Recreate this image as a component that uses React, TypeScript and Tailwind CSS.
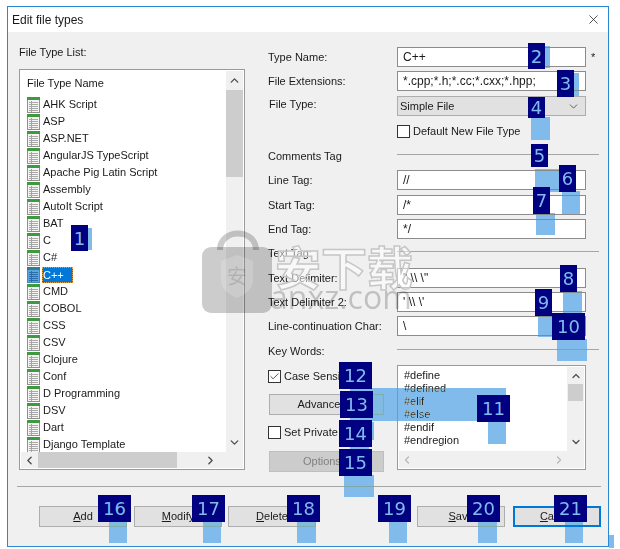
import { ChevronDown, ChevronLeft, ChevronRight, ChevronUp, Check, X } from 'lucide-react';

const fileTypes = [
  'AHK Script', 'ASP', 'ASP.NET', 'AngularJS TypeScript', 'Apache Pig Latin Script', 'Assembly', 'AutoIt Script',
  'BAT', 'C', 'C#', 'C++', 'CMD', 'COBOL', 'CSS', 'CSV', 'Clojure', 'Conf', 'D Programming', 'DSV', 'Dart', 'Django Template',
];

const keyWords = ['#define', '#defined', '#elif', '#else', '#endif', '#endregion'];

// callout numbers sit on top of the dialog, so these keep their own coordinates
const callouts = [
  { n: '1', box: 'left-[71px] top-[225px] w-[17px] h-[26px]' },
  { n: '2', box: 'left-[528px] top-[43px] w-[17px] h-[26px]' },
  { n: '3', box: 'left-[557px] top-[70px] w-[17px] h-[27px]' },
  { n: '4', box: 'left-[528px] top-[97px] w-[17px] h-[21px]' },
  { n: '5', box: 'left-[531px] top-[144px] w-[17px] h-[23px]' },
  { n: '6', box: 'left-[559px] top-[165px] w-[17px] h-[27px]' },
  { n: '7', box: 'left-[533px] top-[187px] w-[17px] h-[27px]' },
  { n: '8', box: 'left-[560px] top-[265px] w-[17px] h-[27px]' },
  { n: '9', box: 'left-[535px] top-[289px] w-[17px] h-[27px]' },
  { n: '10', box: 'left-[552px] top-[313px] w-[33px] h-[27px]' },
  { n: '11', box: 'left-[477px] top-[395px] w-[33px] h-[27px]' },
  { n: '12', box: 'left-[339px] top-[362px] w-[33px] h-[27px]' },
  { n: '13', box: 'left-[340px] top-[391px] w-[33px] h-[27px]' },
  { n: '14', box: 'left-[339px] top-[420px] w-[33px] h-[27px]' },
  { n: '15', box: 'left-[339px] top-[449px] w-[33px] h-[27px]' },
  { n: '16', box: 'left-[98px] top-[495px] w-[33px] h-[27px]' },
  { n: '17', box: 'left-[192px] top-[495px] w-[33px] h-[27px]' },
  { n: '18', box: 'left-[287px] top-[495px] w-[33px] h-[27px]' },
  { n: '19', box: 'left-[378px] top-[495px] w-[33px] h-[27px]' },
  { n: '20', box: 'left-[467px] top-[495px] w-[33px] h-[27px]' },
  { n: '21', box: 'left-[554px] top-[495px] w-[33px] h-[27px]' },
];

const bars = [
  'left-[88px] top-[228px] w-[4px] h-[22px]',
  'left-[545px] top-[46px] w-[5px] h-[22px]',
  'left-[574px] top-[73px] w-[5px] h-[23px]',
  'left-[531px] top-[117px] w-[19px] h-[23px]',
  'left-[535px] top-[169px] w-[24px] h-[23px]',
  'left-[562px] top-[191px] w-[18px] h-[23px]',
  'left-[536px] top-[213px] w-[19px] h-[22px]',
  'left-[563px] top-[291px] w-[19px] h-[22px]',
  'left-[538px] top-[315px] w-[19px] h-[22px]',
  'left-[557px] top-[339px] w-[30px] h-[22px]',
  'left-[350px] top-[388px] w-[156px] h-[33px]',
  'left-[488px] top-[422px] w-[18px] h-[22px]',
  'left-[350px] top-[422px] w-[24px] h-[18px]',
  'left-[350px] top-[447px] w-[19px] h-[2px]',
  'left-[344px] top-[475px] w-[30px] h-[22px]',
  'left-[109px] top-[522px] w-[18px] h-[21px]',
  'left-[203px] top-[522px] w-[18px] h-[21px]',
  'left-[297px] top-[522px] w-[19px] h-[21px]',
  'left-[389px] top-[522px] w-[18px] h-[21px]',
  'left-[478px] top-[522px] w-[19px] h-[21px]',
  'left-[565px] top-[522px] w-[18px] h-[21px]',
  'left-[609px] top-[535px] w-[5px] h-[13px]',
];

function FileIcon({ selected }: { selected?: boolean }) {
  return (
    <svg width="13" height="16" viewBox="0 0 13 16" className="shrink-0">
      <rect x="0.5" y="0.5" width="12" height="15" fill={selected ? '#5da5e0' : '#f4f4f4'} stroke={selected ? '#4a86b8' : '#8f8f8f'} />
      <rect x="0" y="0" width="13" height="3" fill={selected ? '#2f7f8f' : '#3f9a3f'} />
      <path d="M2 5.5h9M2 7.5h9M2 9.5h9M2 11.5h9M2 13.5h9" stroke={selected ? '#2a6ea8' : '#a9a9a9'} strokeWidth="1" />
      <path d="M4.5 4v11" stroke={selected ? '#2a6ea8' : '#e08a8a'} strokeWidth="1" />
    </svg>
  );
}

function TextField({ label, value }: { label: string; value: string }) {
  return (
    <div className="flex items-center h-5">
      <span className="w-[129px]">{label}</span>
      <div className="w-[189px] h-5 bg-white border border-[#8c8c8c] px-[5px] text-[12px] leading-[18px] whitespace-pre">{value}</div>
    </div>
  );
}

function Section({ label, className }: { label: string; className: string }) {
  return (
    <div className={`flex items-center h-[14px] ${className}`}>
      <span className="w-[129px] pt-[4px]">{label}</span>
      <div className="w-[202px] h-px bg-[#a6a6a6]" />
    </div>
  );
}

function DialogButton({ mnemonic, rest, focused }: { mnemonic: string; rest: string; focused?: boolean }) {
  return (
    <button className={`w-[88px] h-[21px] bg-[#e1e1e1] flex items-center justify-center ${focused ? 'border-2 border-[#0078d7]' : 'border border-[#adadad]'}`}>
      <span className="underline">{mnemonic}</span>{rest}
    </button>
  );
}

export default function App() {
  return (
    <div className="relative w-[620px] h-[549px] bg-white overflow-hidden text-[11px] text-[#1a1a1a] font-['Liberation_Sans',sans-serif]">
      <div className="ml-[7px] mt-[6px] w-[602px] h-[541px] border border-[#2a87d0] bg-[#f0f0f0] flex flex-col">
        <div className="h-[25px] bg-white flex items-center justify-between pl-[4px] pr-[7px] text-[12px]">
          <span>Edit file types</span>
          <X size={15} strokeWidth={1.2} />
        </div>

        <div className="flex h-[454px]">
          <div className="ml-[11px] w-[225px] flex flex-col">
            <div className="h-[37px] flex items-center pt-[3px]">File Type List:</div>
            <div className="w-[226px] h-[401px] bg-white border border-[#9a9a9a] p-[1px] flex flex-col">
              <div className="flex h-[381px]">
                <div className="flex-1 pl-[6px] min-w-0">
                  <div className="h-[24px] flex items-end pb-[4px]">File Type Name</div>
                  <ul className="mt-[1px]">
                    {fileTypes.map((name) => (
                      <li key={name} className="flex items-center gap-[2px] h-[17px]">
                        <FileIcon selected={name === 'C++'} />
                        {name === 'C++' ? (
                          <span className="bg-[#0078d7] text-white h-[16px] px-[1px] w-[31px] leading-[16px] outline-1 outline-dotted outline-[#e0a050] -outline-offset-1">{name}</span>
                        ) : (
                          <span className="px-[1px]">{name}</span>
                        )}
                      </li>
                    ))}
                  </ul>
                </div>
                <div className="w-[17px] bg-[#f0f0f0] flex flex-col items-center">
                  <ChevronUp size={13} strokeWidth={2.6} className="mt-[3px] text-[#505050]" />
                  <div className="w-[17px] h-[87px] bg-[#cdcdcd] mt-[3px]" />
                  <ChevronDown size={13} strokeWidth={2.6} className="mt-auto mb-[3px] text-[#505050]" />
                </div>
              </div>
              <div className="h-[16px] bg-[#f0f0f0] flex items-center pl-[2px] text-[#505050]">
                <ChevronLeft size={13} strokeWidth={2.6} />
                <div className="w-[139px] h-[16px] bg-[#cdcdcd] ml-[2px]" />
                <ChevronRight size={13} strokeWidth={2.6} className="ml-[27px]" />
              </div>
            </div>
          </div>

          <div className="ml-[24px] flex flex-col pt-[15px]">
            <div className="relative">
              <TextField label="Type Name:" value="C++" />
              <span className="absolute left-[323px] top-[2px]">*</span>
            </div>
            <div className="mt-[4px]"><TextField label="File Extensions:" value="*.cpp;*.h;*.cc;*.cxx;*.hpp;" /></div>
            <div className="flex items-center h-5 mt-[5px]">
              <span className="w-[129px] pl-[1px] pb-[3px]">File Type:</span>
              <div className="w-[189px] h-5 bg-[#e1e1e1] border border-[#adadad] pl-[2px] pr-[5px] flex items-center justify-between">
                Simple File
                <ChevronDown size={13} strokeWidth={1.5} className="text-[#404040]" />
              </div>
            </div>
            <div className="flex items-center gap-[3px] ml-[129px] mt-[9px] h-[12px]">
              <div className="w-[13px] h-[13px] bg-white border border-[#333]" />
              <span>Default New File Type</span>
            </div>

            <Section label="Comments Tag" className="mt-[10px]" />
            <div className="mt-[9px]"><TextField label="Line Tag:" value="//" /></div>
            <div className="mt-[5px]"><TextField label="Start Tag:" value="/*" /></div>
            <div className="mt-[4px]"><TextField label="End Tag:" value="*/" /></div>

            <Section label="Text Tag:" className="mt-[5px]" />
            <div className="mt-[10px]"><TextField label="Text Delimiter:" value={'" \\\\ \\"'} /></div>
            <div className="mt-[4px]"><TextField label="Text Delimiter 2:" value={"' \\\\ \\'"} /></div>
            <div className="mt-[4px]"><TextField label="Line-continuation Char:" value="\" /></div>

            <Section label="Key Words:" className="mt-[6px]" />

            <div className="flex mt-[9px]">
              <div className="w-[129px] flex flex-col">
                <div className="flex items-center gap-[3px] h-[13px] mt-[5px]">
                  <div className="w-[13px] h-[13px] bg-white border border-[#333] flex items-center justify-center">
                    <Check size={11} strokeWidth={1.6} />
                  </div>
                  <span>Case Sensitive</span>
                </div>
                <button className="w-[115px] h-[21px] ml-[1px] mt-[11px] bg-[#e1e1e1] border border-[#adadad]">Advanced...</button>
                <div className="flex items-center gap-[3px] h-[13px] mt-[11px]">
                  <div className="w-[13px] h-[13px] bg-white border border-[#333]" />
                  <span>Set Private Colors</span>
                </div>
                <button className="w-[115px] h-[21px] ml-[1px] mt-[12px] bg-[#cccccc] border border-[#bfbfbf] text-[#808080]">Options...</button>
              </div>
              <div className="w-[189px] h-[105px] border border-[#9a9a9a] p-[1px] bg-white">
                <div className="h-full bg-[#f0f0f0] flex flex-col">
                  <div className="flex h-[84px]">
                    <div className="w-[168px] bg-white pl-[5px] pt-[2px]">
                      {keyWords.map((word) => (
                        <div key={word} className="h-[13px] leading-[13px]">{word}</div>
                      ))}
                    </div>
                    <div className="flex-1 flex flex-col items-center">
                      <ChevronUp size={12} strokeWidth={2.6} className="mt-[3px] text-[#505050]" />
                      <div className="w-[15px] h-[17px] bg-[#cdcdcd] mt-[2px]" />
                      <ChevronDown size={12} strokeWidth={2.6} className="mt-auto mb-[3px] text-[#505050]" />
                    </div>
                  </div>
                  <div className="w-[164px] ml-[2px] mt-[3px] flex justify-between text-[#b5b5b5]">
                    <ChevronLeft size={12} strokeWidth={2.4} />
                    <ChevronRight size={12} strokeWidth={2.4} />
                  </div>
                </div>
              </div>
            </div>
          </div>
        </div>

        <div className="h-px bg-[#a6a6a6] ml-[9px] mr-[7px]" />

        <div className="flex pt-[19px] pl-[31px]">
          <DialogButton mnemonic="A" rest="dd" />
          <div className="ml-[7px]"><DialogButton mnemonic="M" rest="odify" /></div>
          <div className="ml-[6px]"><DialogButton mnemonic="D" rest="elete" /></div>
          <div className="ml-[101px]"><DialogButton mnemonic="S" rest="ave" /></div>
          <div className="ml-[8px]"><DialogButton mnemonic="C" rest="ancel" focused /></div>
        </div>
      </div>

      {/* watermark */}
      <svg className="absolute left-[200px] top-[230px] pointer-events-none" width="76" height="86" viewBox="0 0 76 86">
        <path d="M20 20 C20 -2 56 -2 56 20" fill="none" stroke="#000" strokeOpacity="0.2" strokeWidth="6" />
        <rect x="2" y="17" width="70" height="66" rx="9" fill="#000" fillOpacity="0.2" />
        <path d="M21 31 L37 25 L53 31 V50 C53 60 44 65 37 68 C30 65 21 60 21 50 Z" fill="#fff" fillOpacity="0.18" />
        <text x="37" y="54" textAnchor="middle" fontSize="20" fill="#000" fillOpacity="0.12" fontFamily="'Noto Sans CJK SC', sans-serif">安</text>
      </svg>
      <div className="absolute left-[275px] top-[230px] pointer-events-none text-[46px] leading-[70px] text-white/50 font-bold [-webkit-text-stroke:1.5px_#c6c6c6] font-['Noto_Sans_CJK_SC',sans-serif]">安下载</div>
      <div className="absolute left-[270px] top-[271px] pointer-events-none text-[32px] leading-[52px] text-black/20 font-['Open_Sans',sans-serif]">anxz.com</div>

      {bars.map((box) => (
        <div key={box} className={`absolute bg-[#80bbeb] mix-blend-darken ${box}`} />
      ))}
      {callouts.map(({ n, box }) => (
        <div key={n} className={`absolute bg-[#000080] text-[#80bbeb] flex items-center justify-center text-[18px] font-['DejaVu_Sans',sans-serif] ${box}`}>{n}</div>
      ))}
    </div>
  );
}
